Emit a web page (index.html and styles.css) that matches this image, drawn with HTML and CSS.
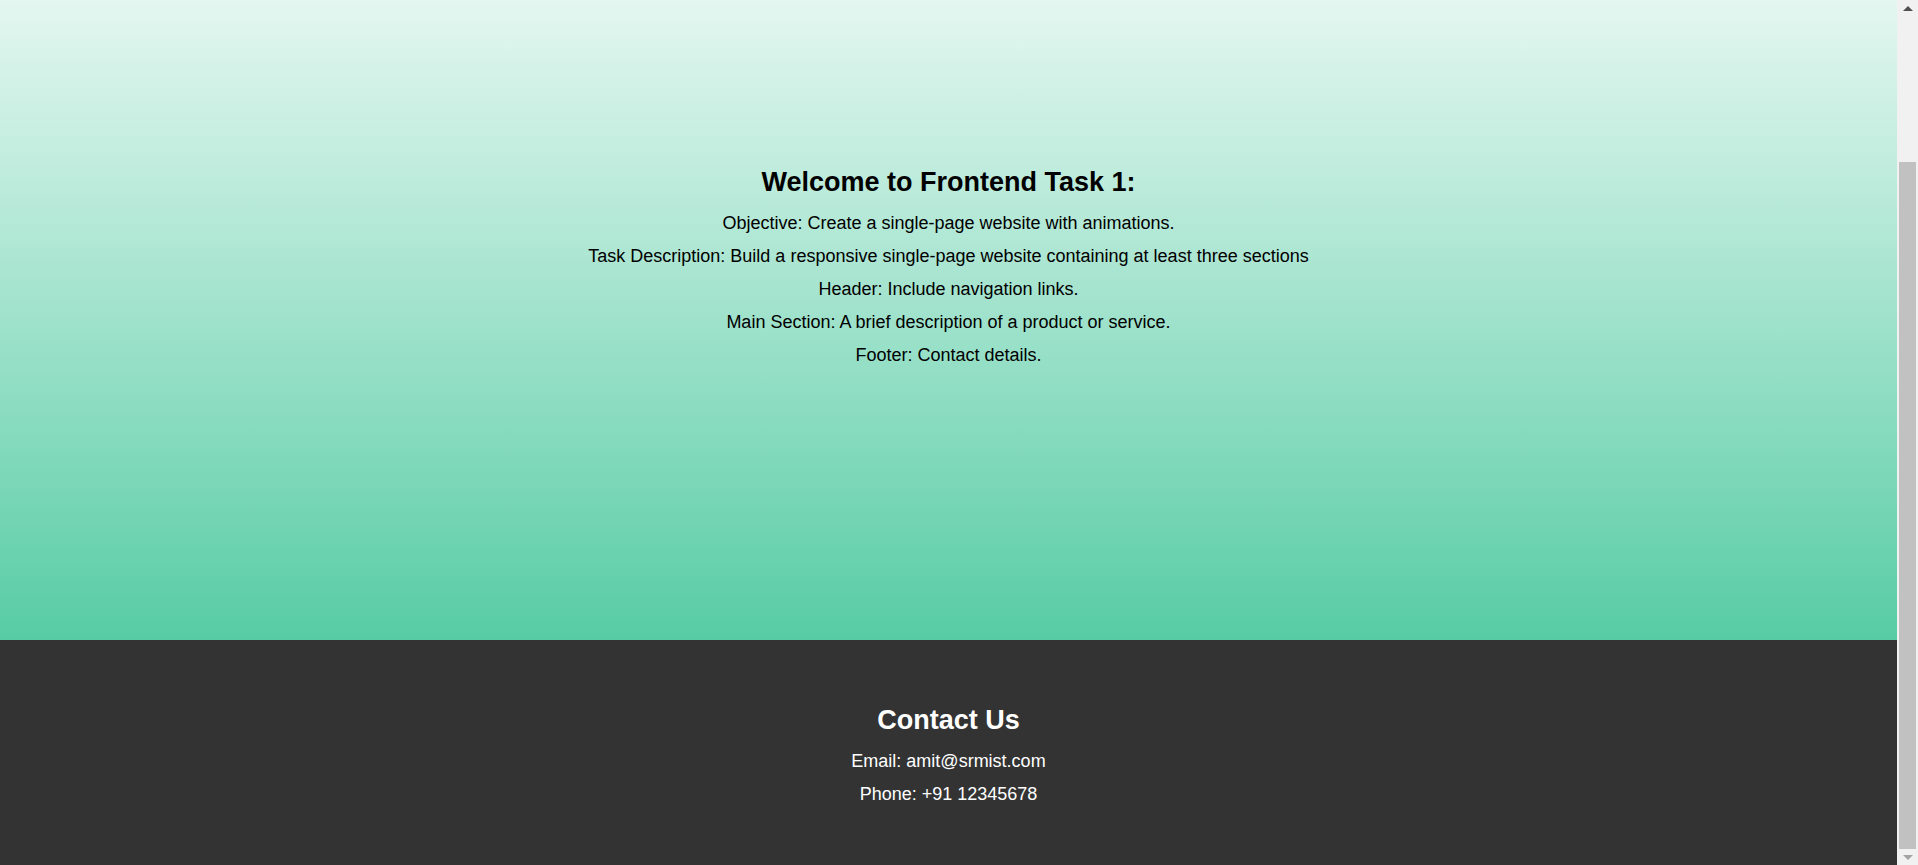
FILE: index.html
```html
<!DOCTYPE html>
<html lang="en">
<head>
<meta charset="UTF-8">
<title>Frontend Task 1</title>
<link rel="stylesheet" href="styles.css">
</head>
<body>
<div class="window">
  <div class="page">
    <main class="main-section" id="about">
      <h2 class="section-title">Welcome to Frontend Task 1:</h2>
      <p class="text">Objective: Create a single-page website with animations.</p>
      <p class="text">Task Description: Build a responsive single-page website containing at least three sections</p>
      <p class="text">Header: Include navigation links.</p>
      <p class="text">Main Section: A brief description of a product or service.</p>
      <p class="text">Footer: Contact details.</p>
    </main>
    <footer class="site-footer" id="contact">
      <h2 class="section-title">Contact Us</h2>
      <p class="text">Email: amit@srmist.com</p>
      <p class="text">Phone: +91 12345678</p>
    </footer>
  </div>
  <div class="scrollbar" aria-hidden="true">
    <div class="sb-button"><span class="arrow-up"></span></div>
    <div class="sb-gap"></div>
    <div class="sb-thumb"></div>
    <div class="sb-button sb-button-down"><span class="arrow-down"></span></div>
  </div>
</div>
</body>
</html>
```

FILE: styles.css
```css
body {
  margin: 0;
  font-family: "Liberation Sans", Arial, sans-serif;
  font-size: 18px;
  color: #000;
  overflow: hidden;
}

.window {
  display: flex;
  height: 865px;
}

.page {
  flex: 1;
  display: flex;
  flex-direction: column;
}

.main-section {
  height: 640px;
  box-sizing: border-box;
  padding-top: 152px;
  text-align: center;
  background: linear-gradient(to bottom, #e4f7f0 0%, #9fe2cc 50%, #57cca4 100%);
}

.section-title {
  font-size: 27px;
  font-weight: bold;
  margin: 15px 0;
}

.text {
  margin: 12px 0;
}

.site-footer {
  flex: 1;
  box-sizing: border-box;
  padding-top: 50px;
  text-align: center;
  background: #333333;
  color: #fff;
}

.scrollbar {
  width: 21px;
  background: #f1f1f1;
  display: flex;
  flex-direction: column;
  align-items: center;
}

.sb-button {
  height: 17px;
  width: 100%;
  display: flex;
  align-items: center;
  justify-content: center;
}

.sb-gap {
  height: 145px;
}

.sb-thumb {
  width: 17px;
  height: 687px;
  background: #c1c1c1;
}

.sb-button-down {
  flex: 1;
}

.arrow-up {
  width: 0;
  height: 0;
  border-left: 5px solid transparent;
  border-right: 5px solid transparent;
  border-bottom: 5px solid #505050;
}

.arrow-down {
  width: 0;
  height: 0;
  border-left: 5px solid transparent;
  border-right: 5px solid transparent;
  border-top: 5px solid #a3a3a3;
}
```
